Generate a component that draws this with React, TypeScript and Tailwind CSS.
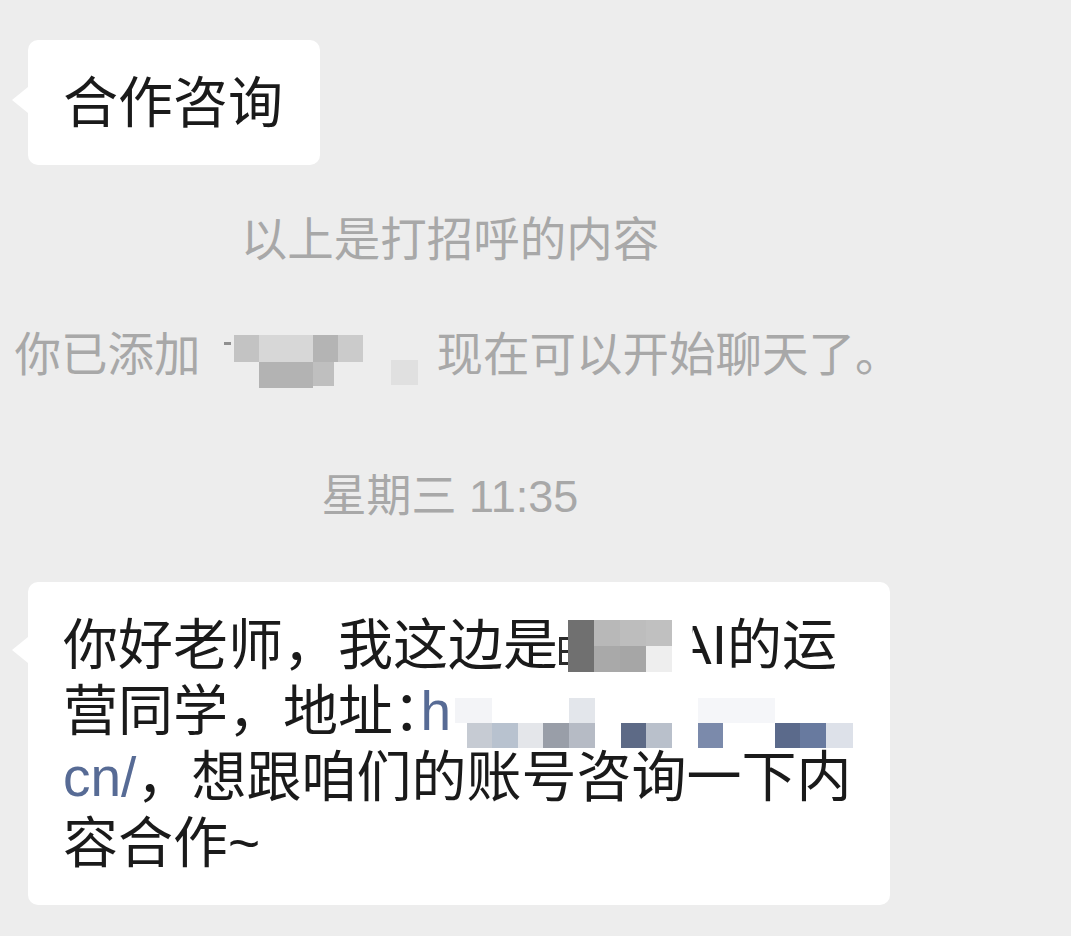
type Rect = [number, number, number, number, string];

function Mosaic({ w, h, rects }: { w: number; h: number; rects: Rect[] }) {
  return (
    <svg width={w} height={h} className="inline-block align-top overflow-visible">
      {rects.map(([x, y, rw, rh, c], i) => (
        <rect key={i} x={x} y={y} width={rw} height={rh} fill={c} />
      ))}
    </svg>
  );
}

function Bubble({ tailTop, className, children }: any) {
  return (
    <div className={"relative self-start ml-[28px] bg-white rounded-[10px] " + className}>
      <span
        className="absolute left-[-16px] w-0 h-0 border-y-[13px] border-y-transparent border-r-[16px] border-r-white"
        style={{ top: tailTop }}
      />
      {children}
    </div>
  );
}

const nameMosaic: Rect[] = [
  [33, 10, 25, 27, "#c3c3c3"],
  [58, 10, 54, 27, "#d7d7d7"],
  [112, 10, 25, 27, "#b4b4b4"],
  [137, 10, 25, 27, "#cbcbcb"],
  [58, 37, 54, 26, "#b3b3b3"],
  [112, 37, 21, 24, "#bfbfbf"],
  [190, 35, 27, 25, "#e0e0e0"],
  [23, 17, 7, 3, "#8f8f8f"],
];

const line1Mosaic: Rect[] = [
  [1, 25, 3, 28, "#2a2a2a"],
  [1, 25, 9, 3, "#2a2a2a"],
  [1, 38, 9, 3, "#2a2a2a"],
  [1, 50, 9, 3, "#2a2a2a"],
  [10, 8, 26, 52, "#707070"],
  [36, 8, 26, 26, "#b8b8b8"],
  [36, 34, 26, 26, "#a9a9a9"],
  [62, 8, 26, 26, "#bdbdbd"],
  [62, 34, 26, 26, "#a6a6a6"],
  [88, 8, 26, 26, "#c0c0c0"],
  [88, 34, 26, 26, "#eeeeee"],
];

const linkMosaic: Rect[] = [
  [4, 20, 37, 25, "#f3f4f7"],
  [118, 20, 26, 25, "#e3e6eb"],
  [247, 20, 77, 25, "#f5f6f9"],
  [16, 45, 25, 25, "#c6cbd3"],
  [41, 45, 26, 25, "#b8c2cf"],
  [67, 45, 25, 25, "#e4e6ea"],
  [92, 45, 26, 25, "#999ea8"],
  [118, 45, 26, 25, "#b6bbc5"],
  [170, 45, 25, 25, "#5d6a86"],
  [195, 45, 26, 25, "#b9c0cb"],
  [247, 45, 25, 25, "#7b8aab"],
  [324, 45, 25, 25, "#5b6a8b"],
  [349, 45, 26, 25, "#687a9f"],
  [375, 45, 27, 25, "#dde1e9"],
];

export default function App() {
  return (
    <div className="w-[1071px] h-[936px] bg-[#ededed] overflow-hidden font-['Liberation_Sans','Noto_Sans_CJK_SC',sans-serif]">
      <div className="w-[900px] flex flex-col items-center pt-[40px]">
        <Bubble tailTop={47} className="pl-[35px] pr-[37px] pt-[30px] pb-[29px]">
          <p className="text-[55px] leading-[66px] text-[#1a1a1a] whitespace-nowrap">合作咨询</p>
        </Bubble>

        <p className="mt-[45px] text-[46.5px] leading-[60px] text-[#a8a8a8] whitespace-nowrap">
          以上是打招呼的内容
        </p>

        <p className="mt-[55px] ml-[16px] text-[46.5px] leading-[60px] text-[#a8a8a8] whitespace-nowrap">
          你已添加
          <Mosaic w={236} h={60} rects={nameMosaic} />
          现在可以开始聊天了。
        </p>

        <p className="mt-[82px] text-[45px] leading-[60px] text-[#a8a8a8] whitespace-nowrap">
          星期三 11:35
        </p>

        <Bubble tailTop={55} className="mt-[55px] w-[862px] pl-[35px] pt-[30px] pb-[29px]">
          <p className="text-[55px] leading-[66px] text-[#1a1a1a] whitespace-nowrap">
            你好老师，我这边是
            <Mosaic w={117} h={66} rects={line1Mosaic} />
            <span className="inline-block [clip-path:inset(0_0_0_48%)]">A</span>I的运
            <br />
            营同学，地址<span className="[font-feature-settings:'halt']">：</span>
            <span className="text-[#576b95]">h</span>
            <Mosaic w={405} h={66} rects={linkMosaic} />
            <br />
            <span className="text-[#576b95]">cn/</span>，想跟咱们的账号咨询一下内
            <br />
            容合作~
          </p>
        </Bubble>
      </div>
    </div>
  );
}
